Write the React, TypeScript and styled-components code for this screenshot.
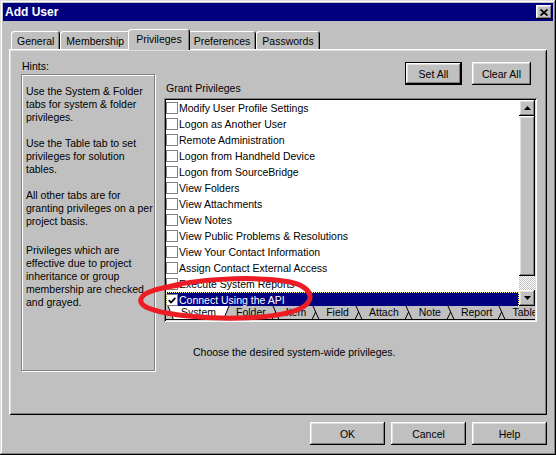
import React from 'react';
import styled, { createGlobalStyle, css } from 'styled-components';

const Global = createGlobalStyle`
  html, body { margin: 0; padding: 0; background: #c0c0c0; }
  body { font-family: "Liberation Sans", Arial, sans-serif; font-size: 10.5px; color: #000; }
  * { box-sizing: border-box; }
`;

const raised = css`
  box-shadow: inset -1px -1px 0 #000, inset 1px 1px 0 #fff, inset -2px -2px 0 #808080, inset 2px 2px 0 #dfdfdf;
`;

const Window = styled.div`
  position: relative;
  width: 556px;
  height: 455px;
  padding: 3px;
  background: #c0c0c0;
  box-shadow: inset -1px -1px 0 #000, inset 1px 1px 0 #dfdfdf, inset -2px -2px 0 #808080, inset 2px 2px 0 #fff;
  display: flex;
  flex-direction: column;
`;

const TitleBar = styled.div`
  height: 18px;
  background: #000080;
  color: #fff;
  font-weight: bold;
  font-size: 12px;
  display: flex;
  align-items: center;
  justify-content: space-between;
  padding: 0 1px 0 2px;
`;

const CloseButton = styled.div`
  width: 16px;
  height: 14px;
  background: #c0c0c0;
  ${raised};
  display: flex;
  align-items: center;
  justify-content: center;
`;

const Body = styled.div`
  padding: 8px 6px 0;
  display: flex;
  flex-direction: column;
  min-width: 0;
`;

const TabsRow = styled.div`
  display: flex;
  align-items: flex-end;
  height: 20px;
  padding-left: 2px;
`;

const Tab = styled.div<{ $active?: boolean }>`
  position: relative;
  z-index: ${(p) => (p.$active ? 2 : 1)};
  height: ${(p) => (p.$active ? 21 : 18)}px;
  margin: ${(p) => (p.$active ? '0 -2px -1px' : '0')};
  padding: ${(p) => (p.$active ? '0 8px 2px' : '1px 6px 0')};
  background: #c0c0c0;
  border-radius: 3px 3px 0 0;
  box-shadow: inset 1px 1px 0 #fff, inset -1px 0 0 #000, inset -2px 0 0 #808080;
  display: flex;
  align-items: center;
  white-space: nowrap;
`;

const Panel = styled.div`
  height: 366px;
  background: #c0c0c0;
  box-shadow: inset 1px 1px 0 #fff, inset -1px -1px 0 #000, inset 2px 2px 0 #dfdfdf, inset -2px -2px 0 #808080;
  padding: 11px 10px 0 12px;
  display: flex;
  gap: 9px;
  min-width: 0;
`;

const LeftCol = styled.div`
  flex: none;
  width: 134px;
  display: flex;
  flex-direction: column;
`;

const Label = styled.div<{ $indent?: number }>`
  line-height: 13px;
  padding-left: ${(p) => p.$indent ?? 0}px;
  white-space: nowrap;
`;

const HintsBox = styled.div`
  margin-top: 1px;
  height: 297px;
  border: 1px solid #808080;
  box-shadow: inset 1px 1px 0 #fff, 1px 1px 0 #fff;
  padding: 10px 4px 0;
`;

const HintPara = styled.p<{ $gap: number }>`
  margin: ${(p) => p.$gap}px 0 0;
  line-height: 13px;
  white-space: nowrap;
`;

const RightCol = styled.div`
  flex: 1;
  min-width: 0;
  display: flex;
  flex-direction: column;
`;

const ButtonRow = styled.div`
  display: flex;
  justify-content: flex-end;
  gap: 10px;
  padding-right: 6px;
  margin-top: 2px;
`;

const PushButton = styled.button<{ $w: number; $default?: boolean }>`
  width: ${(p) => p.$w}px;
  height: 23px;
  padding: 0;
  font: inherit;
  color: #000;
  background: #c0c0c0;
  border: ${(p) => (p.$default ? '1px solid #000' : 'none')};
  ${raised};
  display: flex;
  align-items: center;
  justify-content: center;
`;

const GrantLabel = styled.div`
  margin-top: -3px;
  padding-left: 2px;
  line-height: 12px;
`;

const ListBox = styled.div`
  position: relative;
  margin-top: 4px;
  padding: 2px;
  background: #c0c0c0;
  box-shadow: inset 1px 1px 0 #808080, inset -1px -1px 0 #fff, inset 2px 2px 0 #000, inset -2px -2px 0 #dfdfdf;
`;

const ListMain = styled.div`
  display: flex;
  height: 206px;
`;

const Rows = styled.div`
  flex: 1;
  min-width: 0;
  background: #fff;
  overflow: hidden;
`;

const Row = styled.div<{ $selected?: boolean }>`
  height: 16px;
  display: flex;
  align-items: center;
  gap: 1px;
  white-space: nowrap;
  background: ${(p) => (p.$selected ? '#000080' : 'transparent')};
  color: ${(p) => (p.$selected ? '#fff' : '#000')};
  outline: ${(p) => (p.$selected ? '1px dotted #ffff80' : 'none')};
  outline-offset: -1px;
`;

const Check = styled.span`
  flex: none;
  width: 12px;
  height: 12px;
  border: 1px solid #808080;
  background: #fff;
  display: flex;
  align-items: center;
  justify-content: center;
`;

const ScrollBar = styled.div`
  flex: none;
  width: 16px;
  display: flex;
  flex-direction: column;
`;

const ScrollBtn = styled.div`
  height: 16px;
  background: #c0c0c0;
  ${raised};
  display: flex;
  align-items: center;
  justify-content: center;
`;

const Thumb = styled.div`
  height: 160px;
  background: #c0c0c0;
  ${raised};
`;

const Track = styled.div`
  flex: 1;
  background: repeating-conic-gradient(#c0c0c0 0% 25%, #fff 0% 50%) 0 0 / 2px 2px;
`;

const Strip = styled.div`
  height: 14px;
  display: flex;
  overflow: hidden;
  background: #c0c0c0;
`;

const SheetTab = styled.div<{ $active?: boolean }>`
  flex: none;
  height: 14px;
  padding: 0 5px;
  line-height: 13px;
  background: ${(p) => (p.$active ? '#fff' : 'transparent')};
  border-bottom: 1px solid #000;
  white-space: nowrap;
`;

const Edge = styled.svg`
  flex: none;
  display: block;
`;

const Hint = styled.div`
  margin-top: 24px;
  padding-left: 29px;
  line-height: 13px;
`;

const Footer = styled.div`
  display: flex;
  justify-content: flex-end;
  gap: 6px;
  margin-top: 7px;
`;

const Overlay = styled.svg`
  position: absolute;
  left: 0;
  top: 0;
  pointer-events: none;
`;

const items = [
  'Modify User Profile Settings',
  'Logon as Another User',
  'Remote Administration',
  'Logon from Handheld Device',
  'Logon from SourceBridge',
  'View Folders',
  'View Attachments',
  'View Notes',
  'View Public Problems & Resolutions',
  'View Your Contact Information',
  'Assign Contact External Access',
  'Execute System Reports',
  'Connect Using the API',
];

const sheets = ['System', 'Folder', 'Item', 'Field', 'Attach', 'Note', 'Report', 'Table'];

const EdgeSel: React.FC<{ side: 'left' | 'right' }> = ({ side }) => (
  <Edge width="10" height="14" viewBox="0 0 10 14">
    {side === 'left' ? (
      <>
        <polygon points="2,0 10,0 10,13 7.5,13" fill="#fff" />
        <line x1="2" y1="0" x2="7.5" y2="13.5" stroke="#000" strokeWidth="1" />
      </>
    ) : (
      <>
        <polygon points="0,0 8,0 2.5,13 0,13" fill="#fff" />
        <line x1="2.5" y1="13.5" x2="8" y2="0" stroke="#000" strokeWidth="1" />
      </>
    )}
    <line x1="0" y1="13.5" x2="10" y2="13.5" stroke="#000" strokeWidth="1" />
  </Edge>
);

const EdgeBetween: React.FC = () => (
  <Edge width="10" height="14" viewBox="0 0 10 14">
    <line x1="2" y1="0" x2="8" y2="13.5" stroke="#000" strokeWidth="1" />
    <line x1="1" y1="13.5" x2="4.6" y2="6" stroke="#000" strokeWidth="1" />
    <line x1="0" y1="13.5" x2="10" y2="13.5" stroke="#000" strokeWidth="1" />
  </Edge>
);

const Triangle: React.FC<{ down?: boolean }> = ({ down }) => (
  <svg width="7" height="4" viewBox="0 0 7 4" style={{ display: 'block' }}>
    <polygon points={down ? '0,0 7,0 3.5,4' : '3.5,0 7,4 0,4'} fill="#000" />
  </svg>
);

export default function App() {
  return (
    <>
      <Global />
      <Window>
        <TitleBar>
          <span>Add User</span>
          <CloseButton>
            <svg width="8" height="7" viewBox="0 0 8 7">
              <path d="M0.5 0.5 L7.5 6.5 M7.5 0.5 L0.5 6.5" stroke="#000" strokeWidth="1.7" />
            </svg>
          </CloseButton>
        </TitleBar>
        <Body>
          <TabsRow>
            <Tab>General</Tab>
            <Tab>Membership</Tab>
            <Tab $active>Privileges</Tab>
            <Tab>Preferences</Tab>
            <Tab>Passwords</Tab>
          </TabsRow>
          <Panel>
            <LeftCol>
              <Label $indent={1}>Hints:</Label>
              <HintsBox>
                <HintPara $gap={0}>
                  Use the System &amp; Folder<br />tabs for system &amp; folder<br />privileges.
                </HintPara>
                <HintPara $gap={13}>
                  Use the Table tab to set<br />privileges for solution<br />tables.
                </HintPara>
                <HintPara $gap={13}>
                  All other tabs are for<br />granting privileges on a per<br />project basis.
                </HintPara>
                <HintPara $gap={16}>
                  Privileges which are<br />effective due to project<br />inheritance or group<br />membership are checked<br />and grayed.
                </HintPara>
              </HintsBox>
            </LeftCol>
            <RightCol>
              <ButtonRow>
                <PushButton $w={57} $default>Set All</PushButton>
                <PushButton $w={59}>Clear All</PushButton>
              </ButtonRow>
              <GrantLabel>Grant Privileges</GrantLabel>
              <ListBox>
                <ListMain>
                  <Rows>
                    {items.map((t, i) => {
                      const sel = i === items.length - 1;
                      return (
                        <Row key={t} $selected={sel}>
                          <Check>
                            {sel && (
                              <svg width="8" height="7" viewBox="0 0 8 7">
                                <path d="M0.8 3.2 L3 5.5 L7.3 0.8" stroke="#000" strokeWidth="1.8" fill="none" />
                              </svg>
                            )}
                          </Check>
                          <span>{t}</span>
                        </Row>
                      );
                    })}
                  </Rows>
                  <ScrollBar>
                    <ScrollBtn><Triangle /></ScrollBtn>
                    <Thumb />
                    <Track />
                    <ScrollBtn><Triangle down /></ScrollBtn>
                  </ScrollBar>
                </ListMain>
                <Strip>
                  {sheets.map((s, i) => (
                    <React.Fragment key={s}>
                      {i === 0 && <EdgeSel side="left" />}
                      {i === 1 && <EdgeSel side="right" />}
                      {i > 1 && <EdgeBetween />}
                      <SheetTab $active={i === 0}>{s}</SheetTab>
                    </React.Fragment>
                  ))}
                </Strip>
              </ListBox>
              <Hint>Choose the desired system-wide privileges.</Hint>
            </RightCol>
          </Panel>
          <Footer>
            <PushButton $w={75}>OK</PushButton>
            <PushButton $w={75}>Cancel</PushButton>
            <PushButton $w={75}>Help</PushButton>
          </Footer>
        </Body>
        <Overlay width="556" height="455" viewBox="0 0 556 455">
          <path
            d="M163 288 C190 280, 250 275, 290 282 C305 285, 313 293, 309 301 C304 311, 280 317, 240 318 C200 319, 160 314, 146 307 C137 302, 140 295, 152 291 C160 288, 168 287, 180 285"
            fill="none"
            stroke="#ed1c24"
            strokeWidth="5"
            strokeLinecap="round"
          />
        </Overlay>
      </Window>
    </>
  );
}
